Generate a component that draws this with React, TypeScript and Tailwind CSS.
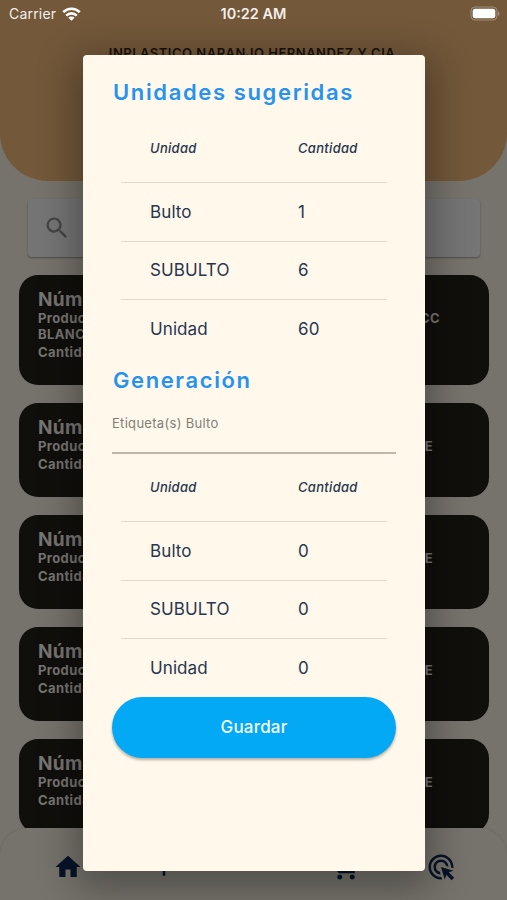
import { MdAdd, MdAdsClick, MdHome, MdSearch, MdShoppingCart } from "react-icons/md";

const SUGGESTED = [
  { unit: "Bulto", amount: 1 },
  { unit: "SUBULTO", amount: 6 },
  { unit: "Unidad", amount: 60 },
];

const GENERATED = [
  { unit: "Bulto", amount: 0 },
  { unit: "SUBULTO", amount: 0 },
  { unit: "Unidad", amount: 0 },
];

const ORDERS = [
  { id: 1, tail: "CC", extra: "BLANCO" },
  { id: 2, tail: "E" },
  { id: 3, tail: "E" },
  { id: 4, tail: "E" },
  { id: 5, tail: "E" },
];

function StatusBar() {
  return (
    <div className="grid h-7 grid-cols-3 items-center pl-[7px] pr-[7px] text-[14px] text-[#f3efea]">
      <div className="-mt-px flex items-center gap-[6px] pl-[2px]">
        <span className="tracking-[0.2px]">Carrier</span>
        <svg width="19" height="14" viewBox="0 0 19 14" fill="none" stroke="#fff" strokeWidth="2.6">
          <path d="M1.2 5.2a11.8 11.8 0 0 1 16.6 0" />
          <path d="M4.2 8.6a7.5 7.5 0 0 1 10.6 0" />
          <path d="M9.5 13.8 6.4 10.8a4.4 4.4 0 0 1 6.2 0Z" fill="#fff" stroke="none" />
        </svg>
      </div>
      <span className="text-center text-[14.5px] font-semibold">10:22 AM</span>
      <svg className="-mt-[2px] justify-self-end" width="30" height="15" viewBox="0 0 30 15">
        <rect x="1" y="1" width="26" height="13" rx="4" fill="none" stroke="#a08e7b" />
        <rect x="2.7" y="2.7" width="22.6" height="9.6" rx="2.4" fill="#fff" />
        <path d="M28 5.2c2 .8 2 3.8 0 4.6Z" fill="#a08e7b" />
      </svg>
    </div>
  );
}

function OrderCard({ tail, extra }: { tail: string; extra?: string }) {
  return (
    <div
      className={`${extra ? "h-[110px] pr-[49px]" : "h-[94px] pr-[56px]"} shrink-0 rounded-[19px] bg-[#100f0c] pl-[19px] pt-[14px] font-bold text-[#777571]`}
    >
      <p className="text-[19px] leading-[21px] tracking-[0.3px]">Número</p>
      <div className="flex justify-between text-[13px] leading-4 tracking-[0.4px]">
        <span>Producto</span>
        <span>{tail}</span>
      </div>
      {extra && <p className="text-[13px] leading-4 tracking-[0.4px]">{extra}</p>}
      <p className="mt-[2px] text-[13px] leading-4 tracking-[0.4px]">Cantidad</p>
    </div>
  );
}

function UnitTable({ rows }: { rows: { unit: string; amount: number }[] }) {
  return (
    <div className="ml-[9px] mr-[9px] text-[#26364f]">
      <div className="grid h-[66.5px] grid-cols-[148px_1fr] items-center pl-[29px] text-[13px] font-medium italic tracking-[0.3px]">
        <span>Unidad</span>
        <span>Cantidad</span>
      </div>
      {rows.map((row) => (
        <div
          key={row.unit}
          className="grid h-[58.6px] grid-cols-[148px_1fr] items-center border-t border-[#dfdacd] pl-[29px] pt-px text-[17px] tracking-[0.1px]"
        >
          <span>{row.unit}</span>
          <span>{row.amount}</span>
        </div>
      ))}
    </div>
  );
}

function UnitsDialog() {
  return (
    <div className="absolute left-[83px] top-[55px] h-[816px] w-[342px] rounded-[4px] bg-[#fff8eb] pl-[29px] pr-[29px] shadow-[0_10px_38px_8px_rgba(0,0,0,0.32)]">
      <h2 className="pl-[1px] pt-[22px] text-[22px] font-semibold leading-[30px] tracking-[1.63px] text-[#2693ee]">
        Unidades sugeridas
      </h2>
      <div className="mt-[8.5px]">
        <UnitTable rows={SUGGESTED} />
      </div>
      <h2 className="mt-[7px] pl-[1px] text-[22px] font-semibold leading-[30px] tracking-[1.6px] text-[#2693ee]">
        Generación
      </h2>
      <div className="h-[59px] border-b-2 border-[#bdb9aa] pt-[18px] text-[13px] leading-5 tracking-[0.3px] text-[#827f78]">
        Etiqueta(s) Bulto
      </div>
      <div className="pt-[0.7px]">
        <UnitTable rows={GENERATED} />
      </div>
      <button className="h-[61px] w-full rounded-full bg-[#04a9f5] text-[17px] font-medium tracking-[0.2px] text-[#f4fbff] shadow-[0_2px_3px_rgba(0,0,0,0.3)]">
        Guardar
      </button>
    </div>
  );
}

export default function App() {
  return (
    <div className="relative flex h-[900px] w-[507px] flex-col overflow-hidden bg-[#76736c] font-['Inter',sans-serif]">
      <header className="h-[181px] shrink-0 rounded-b-[48px] bg-[#73583a]">
        <StatusBar />
        <p className="pr-[3px] pt-[16px] text-center text-[13px] font-semibold leading-[18px] tracking-[0.5px] text-[#17110b]">
          INPLASTICO NARANJO HERNANDEZ Y CIA
        </p>
      </header>

      <main className="flex h-[647px] shrink-0 flex-col overflow-hidden pl-[19px] pr-[18px] pt-[18px]">
        <div className="ml-[9px] mr-[9px] flex h-[58px] shrink-0 items-center rounded-[4px] bg-[#757575] pl-[15px] shadow-[0_1px_2px_rgba(0,0,0,0.35)]">
          <MdSearch className="size-7 text-[#454545]" />
        </div>
        <div className="mt-[18px] flex flex-col gap-[18px]">
          {ORDERS.map((order) => (
            <OrderCard key={order.id} tail={order.tail} extra={order.extra} />
          ))}
        </div>
      </main>

      <nav className="flex h-[72px] shrink-0 items-start justify-between rounded-t-[28px] bg-[#76736c] pl-[53px] pr-[51px] pt-[24px] text-[#071328] shadow-[0_0_3px_rgba(0,0,0,0.14)]">
        <MdHome className="size-[30px]" />
        <MdAdd className="ml-[5px] size-[30px]" />
        <span className="w-[30px]" />
        <MdShoppingCart className="mr-[4px] size-[30px]" />
        <MdAdsClick className="size-[30px]" />
      </nav>

      <UnitsDialog />
    </div>
  );
}
